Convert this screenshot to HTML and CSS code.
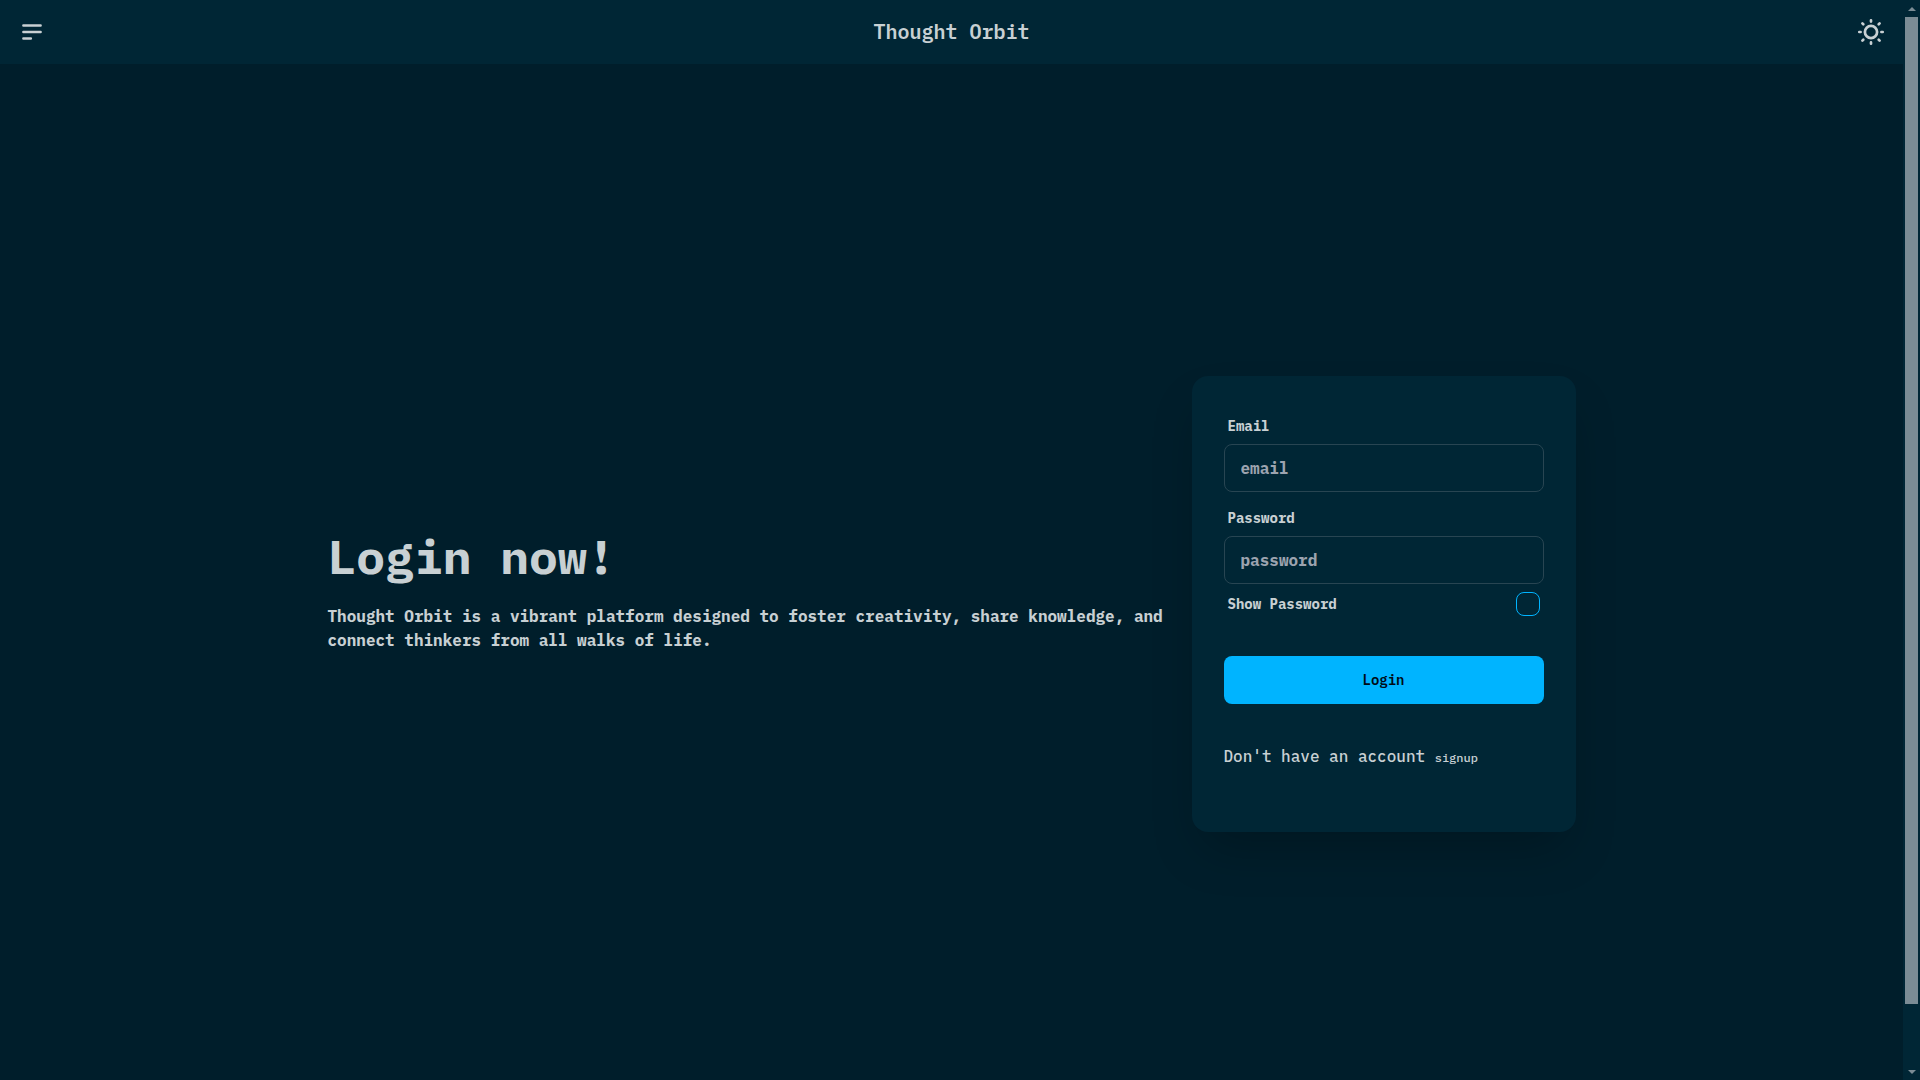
FILE: index.html
```html
<!DOCTYPE html>
<html lang="en">
<head>
<meta charset="utf-8">
<meta name="viewport" content="width=device-width, initial-scale=1">
<title>Thought Orbit</title>
<link rel="stylesheet" href="styles.css">
</head>
<body>
<div class="page">
  <header class="navbar">
    <button class="icon-button" type="button" aria-label="Menu">
      <svg class="menu-icon" viewBox="0 0 24 24" fill="none" stroke="currentColor" stroke-width="2.2" stroke-linecap="round"><path d="M4 6h16M4 12h16M4 18h7"/></svg>
    </button>
    <a class="brand" href="#">Thought Orbit</a>
    <button class="icon-button" type="button" aria-label="Switch theme">
      <svg class="sun-icon" viewBox="-16 -16 32 32" fill="none" stroke="currentColor" stroke-width="2.7" stroke-linecap="round"><circle r="6.1"/><path d="M0-11.7v1.3M0 11.7v-1.3M-11.7 0h1.3M11.7 0h-1.3M-8.6-8.6l.9.9M8.6-8.6l-.9.9M-8.6 8.6l.9-.9M8.6 8.6l-.9-.9"/></svg>
    </button>
  </header>
  <main class="hero">
    <div class="hero-content">
      <section class="intro">
        <h1>Login now!</h1>
        <p>Thought Orbit is a vibrant platform designed to foster creativity, share knowledge, and connect thinkers from all walks of life.</p>
      </section>
      <div class="card">
        <form>
          <div class="field">
            <label for="email">Email</label>
            <input class="text-input" id="email" type="email" placeholder="email">
          </div>
          <div class="field">
            <label for="password">Password</label>
            <input class="text-input" id="password" type="password" placeholder="password">
          </div>
          <div class="check-row">
            <label for="show">Show Password</label>
            <input class="checkbox" id="show" type="checkbox">
          </div>
          <button class="submit" type="submit">Login</button>
        </form>
        <p class="signup">Don't have an account <a href="#">signup</a></p>
      </div>
    </div>
  </main>
</div>
<div class="scrollbar" aria-hidden="true">
  <span class="arrow arrow-up"></span>
  <div class="track"><div class="thumb"></div></div>
  <span class="arrow arrow-down"></span>
</div>
</body>
</html>
```
FILE: styles.css
```css
*, *::before, *::after { box-sizing: border-box; }

body {
  margin: 0;
  display: flex;
  height: 100vh;
  overflow: hidden;
  background: #001e2b;
  color: #c8d0d3;
  font: 500 16px/24px "IBM Plex Mono", "Liberation Mono", monospace;
}

h1, p { margin: 0; }
a { color: inherit; text-decoration: none; }
button, input { font: inherit; color: inherit; }

.page {
  flex: 1;
  min-width: 0;
  overflow-y: auto;
  scrollbar-width: none;
}

.navbar {
  display: flex;
  align-items: center;
  justify-content: space-between;
  height: 64px;
  padding: 0 8px;
  background: #002635;
}
.icon-button {
  display: grid;
  place-items: center;
  width: 48px;
  height: 48px;
  padding: 0;
  border: 0;
  background: none;
  cursor: pointer;
}
.menu-icon { width: 26px; height: 26px; }
.sun-icon { width: 32px; height: 32px; }
.brand { font-size: 20px; line-height: 28px; font-weight: 600; }

.hero {
  display: grid;
  place-items: center;
  min-height: 100vh;
}
.hero-content {
  display: flex;
  align-items: center;
  gap: 16px;
  width: 100%;
  max-width: 1280px;
  padding: 16px;
}
.intro { flex: 1; }
.intro h1 { font-size: 48px; line-height: 48px; font-weight: 700; }
.intro p { padding: 24px 0; font-weight: 700; }

.card {
  width: 384px;
  padding: 32px;
  border-radius: 16px;
  background: #002635;
  box-shadow: 0 25px 50px -12px rgba(0, 0, 0, 0.25);
}
form { display: flex; flex-direction: column; }
.field { display: flex; flex-direction: column; }
.field + .field { margin-top: 8px; }
label {
  padding: 8px 4px;
  font-size: 14px;
  line-height: 20px;
  font-weight: 700;
}
.text-input {
  width: 100%;
  height: 48px;
  padding: 0 16px;
  border: 1px solid #284552;
  border-radius: 8px;
  background: transparent;
  font-weight: 700;
}
.text-input::placeholder { color: #9ca3af; opacity: 1; }
.check-row {
  display: flex;
  align-items: center;
  justify-content: space-between;
  height: 40px;
  padding-right: 4px;
}
.checkbox {
  appearance: none;
  width: 24px;
  height: 24px;
  margin: 0;
  border: 1px solid #00b4ff;
  border-radius: 8px;
}
.checkbox:checked { background: #00b4ff; }
.submit {
  height: 48px;
  margin-top: 32px;
  border: 0;
  border-radius: 8px;
  background: #00b4ff;
  color: #000c16;
  font-size: 14px;
  font-weight: 600;
  cursor: pointer;
}
.signup { margin: 40px 0 32px; }
.signup a { font-size: 12px; line-height: 16px; }

.scrollbar {
  display: flex;
  flex-direction: column;
  align-items: center;
  width: 17px;
  background: #002635;
}
.arrow { height: 17px; display: grid; place-items: center; }
.arrow::before {
  content: "";
  border: 4px solid transparent;
}
.arrow-up::before { border-top: 0; border-bottom-color: #7b8c95; }
.arrow-down::before { border-bottom: 0; border-top-color: #7b8c95; }
.track { flex: 1; width: 13px; }
.thumb { height: 94.4%; background: #7b8c95; }
```
